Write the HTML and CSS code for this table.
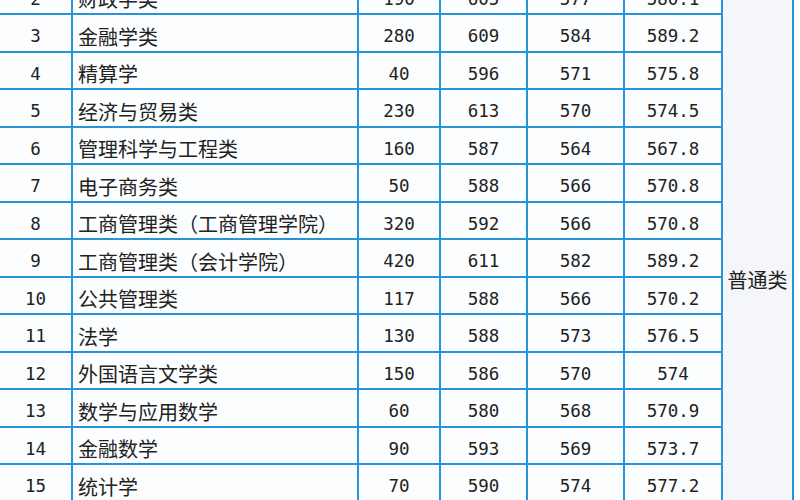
FILE: index.html
```html
<!DOCTYPE html>
<html lang="zh">
<head>
<meta charset="utf-8">
<link rel="stylesheet" href="styles.css">
</head>
<body>
<div class="sheet">
  <div class="c num">2</div><div class="c name">财政学类</div><div class="c num">190</div><div class="c num">605</div><div class="c num">577</div><div class="c num">580.1</div>
  <div class="c num">3</div><div class="c name">金融学类</div><div class="c num">280</div><div class="c num">609</div><div class="c num">584</div><div class="c num">589.2</div>
  <div class="c num">4</div><div class="c name">精算学</div><div class="c num">40</div><div class="c num">596</div><div class="c num">571</div><div class="c num">575.8</div>
  <div class="c num">5</div><div class="c name">经济与贸易类</div><div class="c num">230</div><div class="c num">613</div><div class="c num">570</div><div class="c num">574.5</div>
  <div class="c num">6</div><div class="c name">管理科学与工程类</div><div class="c num">160</div><div class="c num">587</div><div class="c num">564</div><div class="c num">567.8</div>
  <div class="c num">7</div><div class="c name">电子商务类</div><div class="c num">50</div><div class="c num">588</div><div class="c num">566</div><div class="c num">570.8</div>
  <div class="c num">8</div><div class="c name">工商管理类（工商管理学院）</div><div class="c num">320</div><div class="c num">592</div><div class="c num">566</div><div class="c num">570.8</div>
  <div class="c num">9</div><div class="c name">工商管理类（会计学院）</div><div class="c num">420</div><div class="c num">611</div><div class="c num">582</div><div class="c num">589.2</div>
  <div class="c num">10</div><div class="c name">公共管理类</div><div class="c num">117</div><div class="c num">588</div><div class="c num">566</div><div class="c num">570.2</div>
  <div class="c num">11</div><div class="c name">法学</div><div class="c num">130</div><div class="c num">588</div><div class="c num">573</div><div class="c num">576.5</div>
  <div class="c num">12</div><div class="c name">外国语言文学类</div><div class="c num">150</div><div class="c num">586</div><div class="c num">570</div><div class="c num">574</div>
  <div class="c num">13</div><div class="c name">数学与应用数学</div><div class="c num">60</div><div class="c num">580</div><div class="c num">568</div><div class="c num">570.9</div>
  <div class="c num">14</div><div class="c name">金融数学</div><div class="c num">90</div><div class="c num">593</div><div class="c num">569</div><div class="c num">573.7</div>
  <div class="c num">15</div><div class="c name">统计学</div><div class="c num">70</div><div class="c num">590</div><div class="c num">574</div><div class="c num">577.2</div>
  <div class="c kind">普通类</div>
</div>
</body>
</html>
```
FILE: styles.css
```css
html, body {
  margin: 0;
  padding: 0;
  background: #fdfdfd;
  overflow: hidden;
}
body {
  width: 800px;
  height: 500px;
}
.sheet {
  display: grid;
  grid-template-columns: 71px 284px 80px 85px 95px 96px 69px;
  grid-auto-rows: 35.5px;
  gap: 2px;
  width: 792px;
  border-right: 2px solid #2794d8;
  background: #2794d8;
  margin-top: -22.5px;
  color: #222222;
}
.c {
  background: #fcfdfe;
  display: flex;
  align-items: center;
  padding-top: 7px;
  box-sizing: border-box;
  white-space: nowrap;
}
.num {
  justify-content: center;
  font-family: "DejaVu Sans Mono", "Liberation Mono", monospace;
  font-size: 17.5px;
}
.name {
  padding-left: 5px;
  font-family: "Noto Sans CJK SC", sans-serif;
  font-size: 20px;
}
.kind {
  grid-column: 7;
  grid-row: 1 / span 14;
  justify-content: center;
  padding-top: 80px;
  background: #f4f6f9;
  font-family: "Noto Sans CJK SC", sans-serif;
  font-size: 20px;
}
```
